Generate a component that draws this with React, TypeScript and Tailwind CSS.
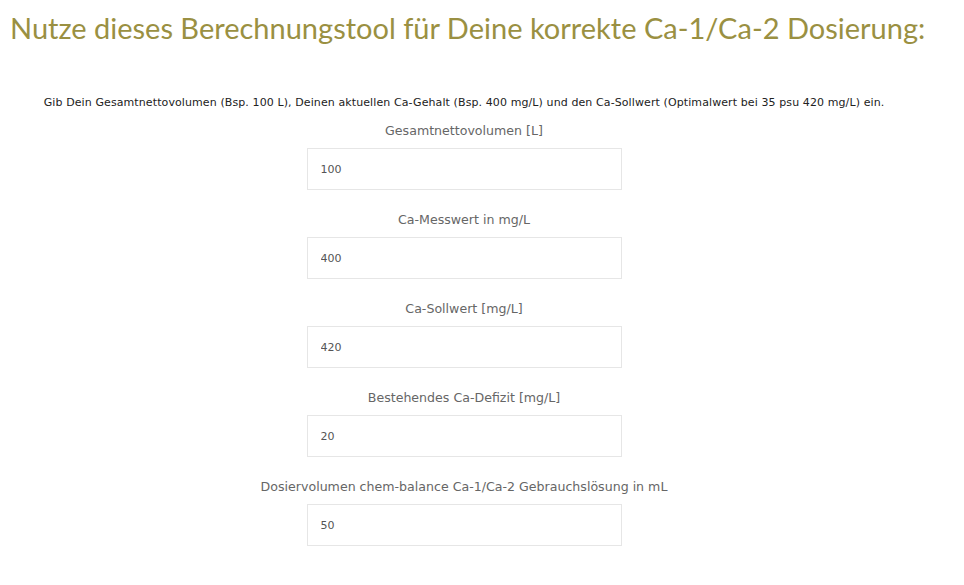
import React from 'react';

// Calcium dosing calculator form
const fields = [
  { label: 'Gesamtnettovolumen [L]', value: '100' },
  { label: 'Ca-Messwert in mg/L', value: '400' },
  { label: 'Ca-Sollwert [mg/L]', value: '420' },
  { label: 'Bestehendes Ca-Defizit [mg/L]', value: '20' },
  { label: 'Dosiervolumen chem-balance Ca-1/Ca-2 Gebrauchslösung in mL', value: '50' },
];

export default function App() {
  return (
    <div className="min-h-[585px] w-[964px] bg-white">
      <div className="w-[918px] pl-[10px]">
        <h1
          className="whitespace-nowrap pt-[9px] text-[29px] leading-[38px] text-[#9a9042]"
          style={{ fontFamily: 'Lato, "Noto Sans", sans-serif' }}
        >
          Nutze dieses Berechnungstool für Deine korrekte Ca-1/Ca-2 Dosierung:
        </h1>
        <div
          className="mt-[49px] flex flex-col items-center"
          style={{ fontFamily: '"DejaVu Sans", Verdana, sans-serif' }}
        >
          <p className="whitespace-nowrap text-[11px] leading-[14px] tracking-[0.1px] text-[#222]">
            Gib Dein Gesamtnettovolumen (Bsp. 100 L), Deinen aktuellen Ca-Gehalt (Bsp. 400 mg/L) und den Ca-Sollwert (Optimalwert bei 35 psu 420 mg/L) ein.
          </p>
          <div className="mt-[12px] flex flex-col items-center gap-[21px]">
            {fields.map((f) => (
              <div key={f.label} className="flex flex-col items-center">
                <label className="text-[12.6px] leading-[18px] text-[#666]">{f.label}</label>
                <input
                  readOnly
                  value={f.value}
                  className="mt-[8px] h-[42px] w-[315px] border border-[#e6e6e6] bg-white px-[13px] text-[11px] text-[#555] outline-none"
                />
              </div>
            ))}
          </div>
        </div>
      </div>
    </div>
  );
}
